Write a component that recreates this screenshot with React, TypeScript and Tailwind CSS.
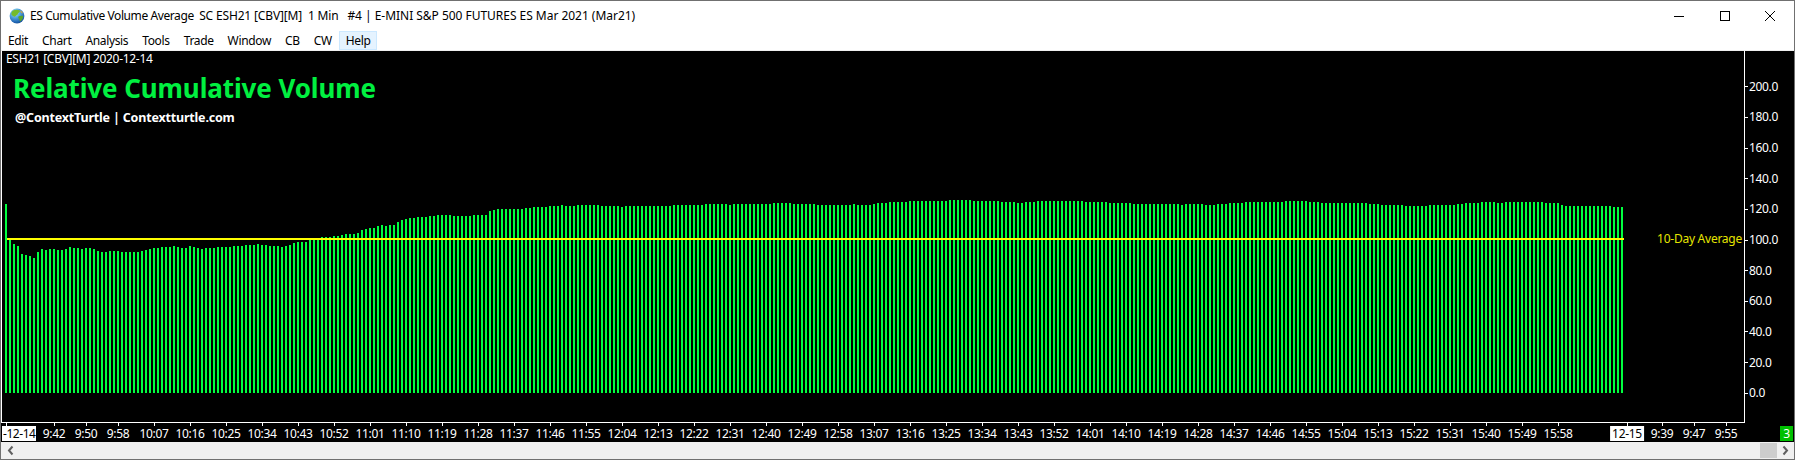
import React from "react";

const uiFont = "font-['Noto_Sans',sans-serif]";

const firstTops = [204,239,244,246,254,255,256,258,252,249,250,249,249,250,250,249,247,248,248,249,248,248,249,251,252,252,251,251,251,252,252,252,252,252,251,250,249,248,248,
247,247,247,246,247,248,248,246,247,248,249,248,248,248,247,247,247,247,246,246,246,245,245,245,244,245,245,246,246,246,247,246,245,243,242,242,242,
240,240,240,237,237,237,236,236,235,234,234,234,233,230,229,228,228,226,225,226,225,225,222,220,219,218,218,217,217,217,216,216,215,215,215,215,216,216,216,216,216,215,215,215,215,211,210,209,209,209,209,209,209,209,208,208];

const runs: [number, number][] = [
  [207,4],[206,3],[205,1],[206,3],[205,6],[206,5],[207,1],[206,12],[205,8],[204,6],[205,1],[204,10],[203,5],[204,6],[205,9],[204,1],[205,4],[204,1],[203,3],[202,3],
  [202,2],[201,10],[200,6],[201,7],[202,4],[203,2],[202,3],[201,12],[202,6],[203,6],[204,12],[205,1],[204,5],[205,3],[204,3],[203,4],[202,7],
  [202,3],[201,6],[202,3],[203,12],[204,3],[205,6],[206,6],[205,7],[204,2],[203,4],[202,4],[203,2],[202,10],[203,4],[205,1],[206,12],[207,3],
];

const tops: number[] = [...firstTops];
for (const [v, n] of runs) for (let i = 0; i < n; i++) tops.push(v);

const menu = ["Edit", "Chart", "Analysis", "Tools", "Trade", "Window", "CB", "CW"];
const yLabels = ["200.0","180.0","160.0","140.0","120.0","100.0","80.0","60.0","40.0","20.0","0.0"];

const nineMin = ["10:07","10:16","10:25","10:34","10:43","10:52","11:01","11:10","11:19","11:28","11:37","11:46","11:55","12:04","12:13","12:22","12:31","12:40","12:49","12:58","13:07","13:16","13:25","13:34","13:43","13:52","14:01","14:10","14:19","14:28","14:37","14:46","14:55","15:04","15:13","15:22","15:31","15:40","15:49"];
const ticks: { label: string; width: number; box?: boolean }[] = [
  { label: "9:42", width: 32 },
  { label: "9:50", width: 32 },
  { label: "9:58", width: 36 },
  ...nineMin.map((label) => ({ label, width: 36 })),
  { label: "15:58", width: 69 },
  { label: "12-15", width: 35, box: true },
  { label: "9:39", width: 32 },
  { label: "9:47", width: 32 },
  { label: "9:55", width: 32 },
];

function Globe() {
  return (
    <svg width="16" height="16" viewBox="0 0 16 16">
      <defs>
        <radialGradient id="g" cx="0.38" cy="0.28" r="0.85">
          <stop offset="0" stopColor="#f2fbff" />
          <stop offset="0.3" stopColor="#62b4ea" />
          <stop offset="0.75" stopColor="#1f66b4" />
          <stop offset="1" stopColor="#123f7c" />
        </radialGradient>
      </defs>
      <circle cx="8" cy="8" r="7.4" fill="url(#g)" />
      <path d="M4 2.6c2-1 4.5-1.2 6.5-.3 1 .8.2 2-1 2.6-.9.5-.6 1.8-1.6 2.2-1.2.4-1.3 1.8-2.4 1.600C4 8.400 3 7 2.300 6.200 2.300 4.800 3 3.400 4 2.600z" fill="#74bb2c" />
      <path d="M9.500 8.500c1.200-.7 3-.8 4.600-.4.200 2-1 4.200-2.800 5.200-.9.300-.6-1.500-1.200-2.300-.5-.8-1.200-1.800-.6-2.500z" fill="#5aa52a" />
      <path d="M11.500 2.500c1.200.6 2 1.500 2.500 2.700-.9.200-2-.4-2.500-1.200-.3-.5-.3-1 0-1.500z" fill="#c9a24a" />
    </svg>
  );
}

export default function App() {
  return (
    <div className={`flex h-[460px] w-[1795px] flex-col border border-[#707070] bg-white text-[12px] ${uiFont}`}>
      <div className="flex h-[30px] shrink-0 items-center text-[#000]">
        <div className="ml-[8px] mr-[5px] flex items-center">
          <Globe />
        </div>
        <span className="whitespace-pre tracking-[-0.41px]">ES Cumulative Volume Average  </span>
        <span className="whitespace-pre tracking-[-0.16px]">SC ESH21 [CBV][M]  1 Min   </span>
        <span className="whitespace-pre tracking-[-0.03px]">#4 | E-MINI S&amp;P 500 FUTURES ES Mar 2021 (Mar21)</span>
        <div className="ml-auto mr-px flex h-full">
          <div className="flex w-[46px] items-center justify-center">
            <svg width="10" height="10" viewBox="0 0 10 10"><path d="M0 5.500H10" stroke="#000" strokeWidth="1" /></svg>
          </div>
          <div className="flex w-[45px] items-center justify-center">
            <svg width="10" height="10" viewBox="0 0 10 10"><rect x="0.500" y="0.500" width="9" height="9" fill="none" stroke="#000" /></svg>
          </div>
          <div className="flex w-[46px] items-center justify-center">
            <svg width="10" height="10" viewBox="0 0 10 10"><path d="M0 0L10 10M10 0L0 10" stroke="#000" strokeWidth="1" /></svg>
          </div>
        </div>
      </div>

      <div className="flex h-[19px] shrink-0 items-center tracking-[-0.35px]">
        {menu.map((m) => (
          <span key={m} className="flex h-full items-center px-[7px] text-black">{m}</span>
        ))}
        <span className="flex h-full items-center border border-[#cce8ff] bg-[#e5f3ff] px-[6px] text-black">Help</span>
      </div>

      <div className="h-px shrink-0 bg-[#f0f0f0]" />

      <div className="flex h-[372px] shrink-0 bg-black text-white">
        <div className="relative w-[1744px] shrink-0 border-b border-l border-r border-white">
          <svg width="1741" height="371" className="block" shapeRendering="crispEdges">
            {tops.map((t, i) => (
              <rect key={i} x={3 + 4 * i} y={t - 51} width="2" height={393 - t} fill="#00ff40" />
            ))}
            <rect x="5" y="187" width="1617" height="2" fill="#ffff00" />
          </svg>
          <div className="absolute left-[4px] top-0 leading-[16px] tracking-[-0.3px]">ESH21 [CBV][M] 2020-12-14</div>
          <div className="absolute left-[11px] top-[17px] text-[26px] font-bold leading-[40px] tracking-[-0.1px] text-[#00f040]">Relative Cumulative Volume</div>
          <div className="absolute left-[13px] top-[58px] text-[12.5px] font-bold leading-[18px] tracking-[-0.18px]">@ContextTurtle | Contextturtle.com</div>
          <div className="absolute right-[2px] top-[180px] whitespace-nowrap leading-[16px] tracking-[-0.25px] text-[#e6e600]">10-Day Average</div>
        </div>
        <div className="flex flex-col pt-[20.5px] tracking-[-0.35px]">
          {yLabels.map((l) => (
            <div key={l} className="flex h-[30.65px] items-center">
              <span className="mr-px h-px w-[3px] bg-white" />
              <span>{l}</span>
            </div>
          ))}
        </div>
      </div>

      <div className="flex h-[19px] shrink-0 bg-black tracking-[-0.3px] text-white">
        <div className="relative w-[53px] shrink-0">
          <div className="ml-px mt-[3px] flex h-[15px] w-[34px] items-center overflow-hidden whitespace-nowrap bg-white pl-px tracking-[-0.45px] text-black">-12-14</div>
          <span className="absolute left-[5px] top-0 h-[3px] w-px bg-white" />
        </div>
        {ticks.map((t) => (
          <div key={t.label} className="relative shrink-0" style={{ width: t.width }}>
            <span className="absolute left-0 top-0 h-[3px] w-px bg-white" />
            <span className={`absolute left-0 top-[3px] flex h-[15px] -translate-x-1/2 items-center whitespace-nowrap ${t.box ? "bg-white px-[2px] text-black" : ""}`}>{t.label}</span>
          </div>
        ))}
        <div className="ml-auto mr-px mt-[3px] flex h-[15px] w-[13px] items-center justify-center bg-[#00c000]">3</div>
      </div>

      <div className="flex h-[17px] shrink-0 items-center bg-[#f0f0f0]">
        <svg width="17" height="17" viewBox="0 0 17 17" className="ml-px"><path d="M10.500 4.500L7 8.500L10.500 12.500" fill="none" stroke="#606060" strokeWidth="2" /></svg>
        <div className="ml-auto h-[15px] w-[17px] bg-[#cdcdcd]" />
        <svg width="17" height="17" viewBox="0 0 17 17"><path d="M6.500 4.500L10 8.500L6.500 12.500" fill="none" stroke="#606060" strokeWidth="2" /></svg>
      </div>
    </div>
  );
}
